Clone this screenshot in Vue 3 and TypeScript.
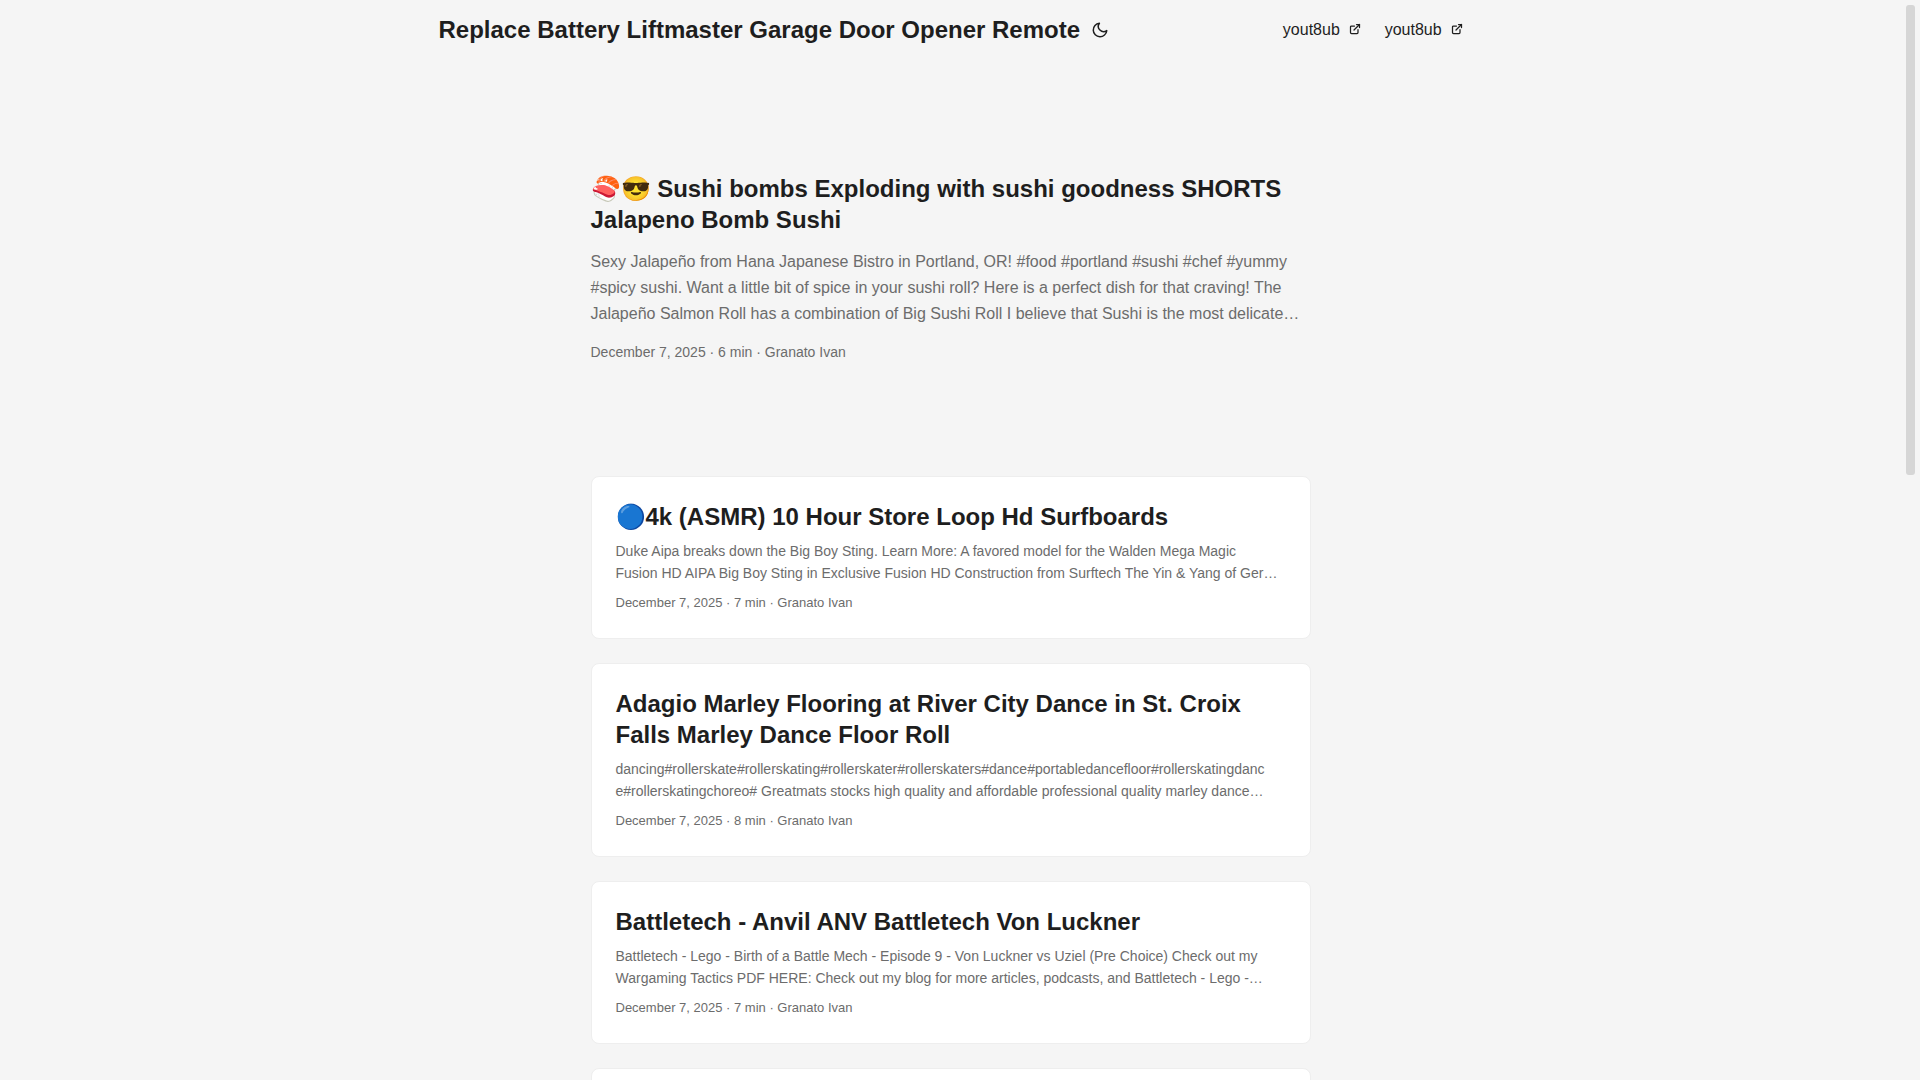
<script setup lang="ts">
interface Post {
  title: string
  summary: string
  minutes: number
}

const date = 'December 7, 2025'
const author = 'Granato Ivan'

const menu: string[] = ['yout8ub', 'yout8ub']

const featured: Post = {
  title: '🍣😎 Sushi bombs Exploding with sushi goodness SHORTS\nJalapeno Bomb Sushi',
  summary:
    'Sexy Jalapeño from Hana Japanese Bistro in Portland, OR! #food #portland #sushi #chef #yummy\n#spicy sushi. Want a little bit of spice in your sushi roll? Here is a perfect dish for that craving! The\nJalapeño Salmon Roll has a combination of Big Sushi Roll I believe that Sushi is the most delicate…',
  minutes: 6,
}

const posts: Post[] = [
  {
    title: '🔵4k (ASMR) 10 Hour Store Loop Hd Surfboards',
    summary:
      'Duke Aipa breaks down the Big Boy Sting. Learn More: A favored model for the Walden Mega Magic\nFusion HD AIPA Big Boy Sting in Exclusive Fusion HD Construction from Surftech The Yin & Yang of Ger…',
    minutes: 7,
  },
  {
    title: 'Adagio Marley Flooring at River City Dance in St. Croix\nFalls Marley Dance Floor Roll',
    summary:
      'dancing#rollerskate#rollerskating#rollerskater#rollerskaters#dance#portabledancefloor#rollerskatingdanc\ne#rollerskatingchoreo# Greatmats stocks high quality and affordable professional quality marley dance…',
    minutes: 8,
  },
  {
    title: 'Battletech - Anvil ANV Battletech Von Luckner',
    summary:
      'Battletech - Lego - Birth of a Battle Mech - Episode 9 - Von Luckner vs Uziel (Pre Choice) Check out my\nWargaming Tactics PDF HERE: Check out my blog for more articles, podcasts, and Battletech - Lego -…',
    minutes: 7,
  },
]
</script>

<template>
  <div class="page">
    <header class="header">
      <nav class="nav">
        <div class="logo">
          <a href="#">Replace Battery Liftmaster Garage Door Opener Remote</a>
          <button class="theme-toggle" type="button" aria-label="Toggle theme">
            <svg width="24" height="18" viewBox="0 0 24 24" fill="none" stroke="currentColor" stroke-width="2" stroke-linecap="round" stroke-linejoin="round">
              <path d="M21 12.79A9 9 0 1 1 11.21 3 7 7 0 0 0 21 12.79z" />
            </svg>
          </button>
        </div>
        <ul class="menu">
          <li v-for="(item, i) in menu" :key="i">
            <a href="#">{{ item }}&nbsp;
              <svg width="12" height="12" viewBox="0 0 24 24" fill="none" stroke="currentColor" stroke-width="2.5" stroke-linecap="round" stroke-linejoin="round" shape-rendering="geometricPrecision">
                <path d="M18 13v6a2 2 0 01-2 2H5a2 2 0 01-2-2V8c0-1.1.9-2 2-2h6" />
                <path d="M15 3h6v6" />
                <path d="M10 14L21 3" />
              </svg>
            </a>
          </li>
        </ul>
      </nav>
    </header>

    <main class="main">
      <article class="featured">
        <h1 class="title">{{ featured.title }}</h1>
        <p class="lead">{{ featured.summary }}</p>
        <footer class="meta meta-lead">{{ date }} · {{ featured.minutes }} min · {{ author }}</footer>
      </article>

      <article v-for="post in posts" :key="post.title" class="card">
        <h2 class="title">{{ post.title }}</h2>
        <p class="summary">{{ post.summary }}</p>
        <footer class="meta">{{ date }} · {{ post.minutes }} min · {{ author }}</footer>
      </article>
      <article class="card card-next"></article>
    </main>
    <div class="scroll-thumb" aria-hidden="true"></div>
  </div>
</template>

<style>
body {
  margin: 0;
  background: #f5f5f5;
}
</style>

<style scoped>
.page {
  box-sizing: border-box;
  height: 100vh;
  overflow: hidden;
  padding-right: 19px;
  background: #f5f5f5;
  color: #1e1e1e;
  font-family: "Liberation Sans", Arial, sans-serif;
  font-size: 16px;
  line-height: 26px;
  text-rendering: optimizeLegibility;
  overflow-wrap: break-word;
}

.scroll-thumb {
  position: fixed;
  top: 5px;
  right: 5px;
  width: 9px;
  height: 470px;
  border-radius: 3px;
  background: #d6d6d6;
}

a {
  color: inherit;
  text-decoration: none;
}

.nav {
  display: flex;
  justify-content: space-between;
  box-sizing: border-box;
  max-width: 1072px;
  margin: 0 auto;
  padding: 0 24px;
  line-height: 60px;
}

.logo {
  display: flex;
  align-items: center;
  gap: 8px;
  font-size: 24px;
  font-weight: 700;
}

.theme-toggle {
  display: flex;
  padding: 0;
  border: 0;
  background: none;
  color: inherit;
  cursor: pointer;
}

.menu {
  display: flex;
  gap: 24px;
  margin: 0;
  padding: 0;
  list-style: none;
}

.main {
  box-sizing: border-box;
  max-width: 768px;
  margin: 0 auto;
  padding: 24px;
}

.featured {
  display: flex;
  flex-direction: column;
  justify-content: center;
  min-height: 320px;
  margin: 24px 0 48px;
}

.title {
  margin: 0;
  font-size: 24px;
  font-weight: 700;
  line-height: 31px;
  white-space: pre-line;
}

.lead,
.summary {
  color: #6c6c6c;
  white-space: pre-line;
}

.lead {
  margin: 14px 0;
}

.summary {
  margin: 8px 0;
  font-size: 14px;
  line-height: 22px;
}

.meta {
  color: #6c6c6c;
  font-size: 13px;
  line-height: 22px;
}

.meta-lead {
  font-size: 14px;
}

.card {
  margin-bottom: 24px;
  padding: 24px;
  border: 1px solid #eee;
  border-radius: 8px;
  background: #fff;
}

.card-next {
  min-height: 112px;
}
</style>
